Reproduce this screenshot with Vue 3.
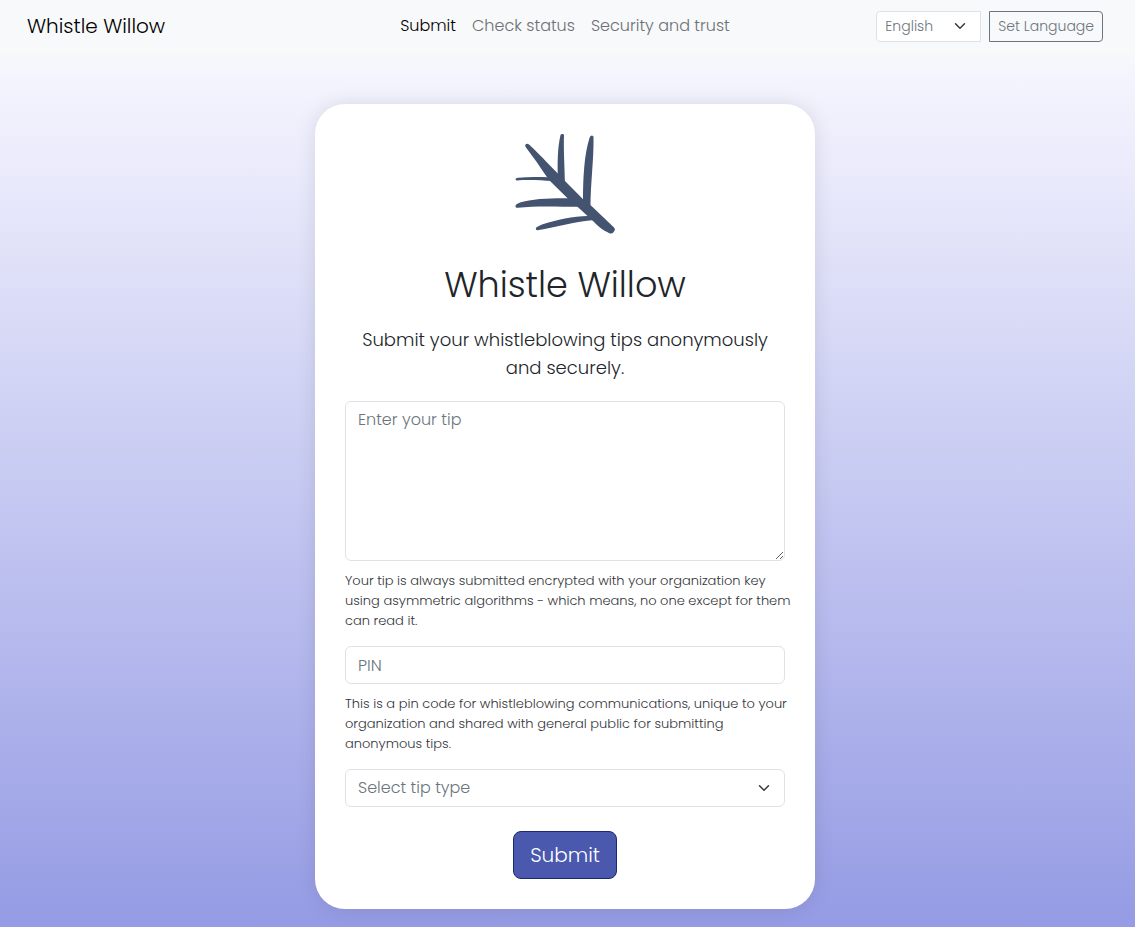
<script setup>
import { ref } from 'vue'

const links = [
  { label: 'Submit', active: true },
  { label: 'Check status', active: false },
  { label: 'Security and trust', active: false },
]
const language = ref('en')
const tip = ref('')
const pin = ref('')
const tipType = ref('')
</script>

<template>
  <div class="page">
    <header class="navbar">
      <a class="brand" href="#">Whistle Willow</a>
      <nav class="links" aria-label="Main">
        <a
          v-for="link in links"
          :key="link.label"
          href="#"
          :class="['link', { active: link.active }]"
        >{{ link.label }}</a>
      </nav>
      <form class="language" @submit.prevent>
        <div class="select-wrap small">
          <select v-model="language" aria-label="Language">
            <option value="en">English</option>
          </select>
          <svg class="chevron" viewBox="0 0 16 16" aria-hidden="true"><path d="m2 5 6 6 6-6" /></svg>
        </div>
        <button class="set-language" type="submit">Set Language</button>
      </form>
    </header>

    <main class="main">
      <form class="card" @submit.prevent>
        <svg class="logo" viewBox="0 0 100 100" aria-hidden="true">
          <path d="M10.500 10.500Q12 8.800 14 10.500C21 17 27 23 32 28.500L43.300 40L50 47L68.300 65.500L76.500 72L98.500 93Q101 95 99 97.500Q97.500 100.500 94 99C87 96 82 91 78 87L63.300 73.500L53.300 65L35 47C30 41 26 34 21.700 28L11 13.500Q9.800 12 10.500 10.500Z" />
          <path d="M45.500 1Q46 0 47 0Q49 0 49 1C48.500 14 49.500 32 50 50L42.800 43C42.500 28 42.500 14 45.500 1Z" />
          <path d="M74.500 4Q75 1.500 76.800 1.500Q78.500 1.500 78.500 3C79 24 75.500 50 75.500 73L68 67C68 45 69 21 74.500 4Z" />
          <path d="M0.500 45Q0.500 44 3 43.800C14 42.600 24 43 33.500 43.300L37.500 47C26 46.200 13 45.400 1.800 46.400Q0.500 46.300 0.500 45Z" />
          <path d="M0.500 71.500Q2 69 9 67.500C22 64.500 38 64.300 54 64.300L64 72.700C44 72.700 20 71.500 3 73.800Q0 74 0.500 71.500Z" />
          <path d="M20.800 94Q21 93 27 90.500C42 85.500 58 82.500 73 82L79.500 86C60 87.500 42 93 22.500 96.300Q20.500 96.300 20.800 94Z" />
        </svg>
        <h1>Whistle Willow</h1>
        <p class="lead">Submit your whistleblowing tips anonymously and securely.</p>

        <textarea
          v-model="tip"
          class="field tip"
          placeholder="Enter your tip"
          aria-label="Enter your tip"
          aria-describedby="tip-help"
        ></textarea>
        <p id="tip-help" class="help">Your tip is always submitted encrypted with your organization key using asymmetric algorithms - which means, no one except for them can read it.</p>

        <input
          v-model="pin"
          class="field"
          type="text"
          placeholder="PIN"
          aria-label="PIN"
          aria-describedby="pin-help"
        />
        <p id="pin-help" class="help">This is a pin code for whistleblowing communications, unique to your organization and shared with general public for submitting anonymous tips.</p>

        <div class="select-wrap">
          <select v-model="tipType" class="field" aria-label="Select tip type">
            <option value="">Select tip type</option>
          </select>
          <svg class="chevron" viewBox="0 0 16 16" aria-hidden="true"><path d="m2 5 6 6 6-6" /></svg>
        </div>

        <button class="submit" type="submit">Submit</button>
      </form>
    </main>
  </div>
</template>

<style>
body {
  margin: 0;
}
</style>

<style scoped>
.page {
  box-sizing: border-box;
  min-height: 100vh;
  padding-right: 5px;
  background: linear-gradient(180deg, #f8f9fa 0, #f8f9fa 48px, #f4f4fe 80px, #959be4 100%);
  color: #212529;
  font-family: Poppins, Inter, "Open Sans", sans-serif;
  font-size: 16px;
  font-weight: 300;
  line-height: 1.5;
}

*,
*::before,
*::after {
  box-sizing: border-box;
}

button,
input,
select,
textarea {
  margin: 0;
  font: inherit;
}

.navbar {
  display: grid;
  grid-template-columns: 1fr auto 1fr;
  align-items: center;
  min-height: 52px;
  padding: 0 27px;
}

.brand {
  color: #000;
  font-size: 20px;
  text-decoration: none;
}

.links {
  display: flex;
  gap: 16px;
}

.link {
  color: #6c7075;
  text-decoration: none;
}

.link.active {
  color: #000;
}

.language {
  display: flex;
  justify-content: flex-end;
  gap: 8px;
  font-size: 14px;
}

.select-wrap {
  position: relative;
}

.select-wrap select {
  appearance: none;
  width: 100%;
  color: #6c757d;
}

.chevron {
  position: absolute;
  top: 0;
  right: 15px;
  bottom: 0;
  width: 12px;
  height: 12px;
  margin: auto 0;
  fill: none;
  stroke: #343a40;
  stroke-width: 2;
  stroke-linecap: round;
  stroke-linejoin: round;
  pointer-events: none;
}

.small {
  width: 105px;
}

.small select {
  height: 31px;
  padding: 0 36px 0 8px;
  border: 1px solid #dee2e6;
  border-radius: 4px 0 0 4px;
  background: #fff;
}

.set-language {
  height: 31px;
  padding: 0 8px;
  border: 1px solid #6c757d;
  border-radius: 0 4px 4px 0;
  background: transparent;
  color: #6c757d;
  white-space: nowrap;
}

.main {
  display: flex;
  justify-content: center;
  padding: 52px 0 18px;
}

.card {
  display: flex;
  flex-direction: column;
  width: 100%;
  max-width: 500px;
  padding: 30px;
  border-radius: 30px;
  background: #fff;
  box-shadow: 0 0 20px rgba(0, 0, 0, 0.1);
}

.logo {
  align-self: center;
  width: 100px;
  height: 100px;
  fill: #435370;
}

h1 {
  margin: 27px 0 17px;
  font-size: 35px;
  font-weight: 300;
  line-height: 48px;
  text-align: center;
}

.lead {
  margin: 0 0 19px;
  font-size: 18px;
  line-height: 28px;
  text-align: center;
}

.field {
  display: block;
  width: 100%;
  height: 38px;
  padding: 6px 12px;
  border: 1px solid #dee2e6;
  border-radius: 6px;
  background: #fff;
  color: #212529;
}

.field::placeholder {
  color: #6c757d;
  opacity: 1;
}

.tip {
  height: 160px;
  resize: vertical;
}

.help {
  margin: 10px -8px 15px 0;
  color: #33363a;
  font-size: 13px;
  line-height: 20px;
}

.submit {
  align-self: center;
  height: 48px;
  margin-top: 24px;
  padding: 0 16px;
  border: 1px solid #1b2a70;
  border-radius: 8px;
  background: #4a58ad;
  color: #fff;
  font-size: 20px;
}
</style>
